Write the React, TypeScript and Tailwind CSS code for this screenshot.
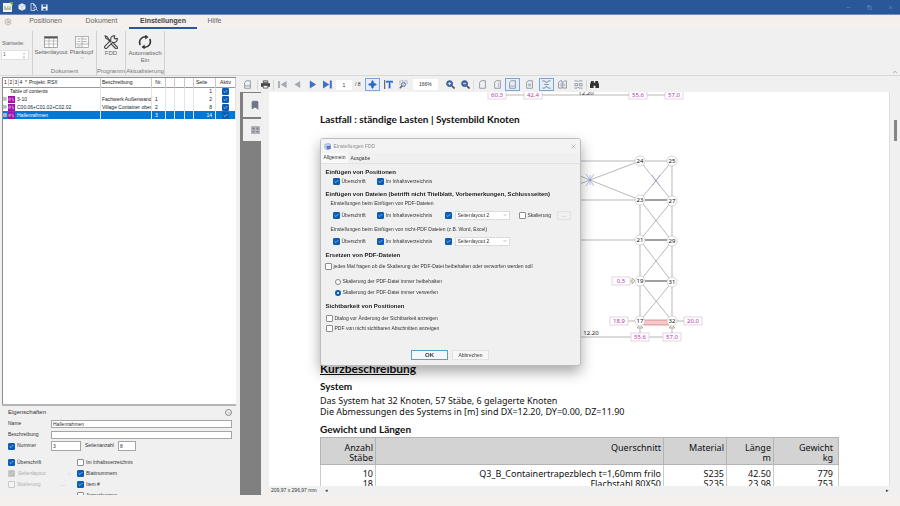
import type { ReactNode } from "react";
import {
  BookmarkIcon,
  Check,
  ChevronDown,
  ChevronUp,
  Copy,
  Minus,
  Settings,
  X,
} from "lucide-react";

const ui = "font-['Liberation_Sans',Arial,sans-serif]";
const docFont = "font-['Noto_Sans','Open_Sans',sans-serif]";
const docBold = "font-['Lato','Noto_Sans',sans-serif] font-bold";

type CheckProps = {
  label?: string;
  name?: string;
  checked?: boolean;
  disabled?: boolean;
  className?: string;
};

function CheckField({ label, name, checked, disabled, className = "" }: CheckProps) {
  return (
    <label className={`flex items-center gap-[2px] whitespace-nowrap ${disabled ? "text-[#b4b4b4]" : ""} ${className}`}>
      <span className="grid size-[7px] shrink-0">
        <input
          type="checkbox"
          aria-label={label ? undefined : name}
          defaultChecked={checked}
          disabled={disabled}
          className="col-start-1 row-start-1 size-[7px] appearance-none rounded-[1px] border border-[#8c8c8c] bg-white checked:border-[#0b5cb5] checked:bg-[#0b5cb5] disabled:border-[#c8c8c8] disabled:bg-[#f4f4f4] disabled:checked:bg-[#bdbdbd]"
        />
        {checked && <Check className="pointer-events-none col-start-1 row-start-1 size-[5px] place-self-center text-[#d5e4f5]" strokeWidth={3} />}
      </span>
      {label}
    </label>
  );
}

/* ---------- title bar ---------- */

function TitleBar() {
  return (
    <header className="flex h-[15px] shrink-0 items-center gap-[3px] border-b border-[#6d8fc0] bg-[#2a579a] px-[3px] text-white">
      <svg viewBox="0 0 10 10" className="mr-[2px] size-[10px]" aria-hidden="true">
        <rect y="1" width="9" height="9" fill="#f1f4ee" />
        <path d="M6 0h4v4z" fill="#6aa84f" />
        <path d="M1 5h2M4 5h1.5M6.500 5H8M1 7h7" stroke="#7d9270" strokeWidth="1" />
      </svg>
      <button aria-label="Neu">
        <svg viewBox="0 0 8 8" className="size-[8px]">
          <path d="M4 .3 7.500 2v4L4 7.700.5 6V2z" fill="#e6eefb" />
          <path d="M.5 2 4 3.500 7.500 2M4 3.500v4" stroke="#9db7dc" strokeWidth=".6" fill="none" />
        </svg>
      </button>
      <button aria-label="Vorschau" className="ml-[1px]">
        <svg viewBox="0 0 8 8" className="size-[8px]" fill="none" stroke="#d6e2f3" strokeWidth=".8">
          <path d="M5 7.500H1V.5h2.500L5.500 2.500V4M3.500.5v2h2" />
          <circle cx="5.200" cy="5.200" r="1.400" />
          <path d="m6.200 6.200 1.500 1.500" />
        </svg>
      </button>
      <button aria-label="Speichern">
        <svg viewBox="0 0 8 8" className="size-[7px]">
          <path d="M.5.5h7v7h-7z" fill="#f3f7fd" />
          <path d="M2 .5h4v2.500H2zM2.500 5h3v2.500h-3z" fill="#2a579a" />
        </svg>
      </button>
      <div className="ml-auto flex items-center gap-[16px] pr-[4px] text-[#7f9dca]">
        <button aria-label="Minimieren"><Minus className="size-[5px]" /></button>
        <button aria-label="Wiederherstellen"><Copy className="size-[5px]" /></button>
        <button aria-label="Schließen"><X className="size-[5px]" /></button>
      </div>
    </header>
  );
}

/* ---------- ribbon ---------- */

function RibbonTabs() {
  return (
    <nav className="flex h-[14px] shrink-0 items-stretch bg-[#f3f0ee] text-[7px] text-[#6a6a6a]">
      <button aria-label="Optionen" className="w-[17px] pl-[4px]"><Settings className="size-[8px] text-[#888]" strokeWidth={1.5} /></button>
      <button className="w-[57px] border-b-2 border-transparent">Positionen</button>
      <button className="w-[55px] border-b-2 border-transparent">Dokument</button>
      <button className="w-[68px] border-b-2 border-[#2a579a] font-bold text-[#444]">Einstellungen</button>
      <button className="w-[35px] border-b-2 border-transparent">Hilfe</button>
    </nav>
  );
}

function RibbonGroup({ title, children }: { title: string; children: ReactNode }) {
  return (
    <section className="flex flex-col justify-between border-l border-[#d2d2d2]">
      <div className="flex justify-center gap-[2px]">{children}</div>
      <h2 className="text-center leading-[8px] text-[#777]">{title}</h2>
    </section>
  );
}

function Ribbon() {
  return (
    <div className="flex h-[47px] shrink-0 border-b border-[#d8d8d8] bg-[#f0f0f0] pt-[2px] text-[6px] text-[#666]">
      <div className="w-[32px] pt-[8px]">
        <label htmlFor="start" className="block pl-[2px] text-[5px] leading-[8px]">Startseite:</label>
        <div className="mt-[3px] ml-[1px] flex h-[10px] w-[28px] items-center border border-[#e0e0e0] bg-white">
          <input id="start" defaultValue="1" className="w-[20px] pl-[1px] text-[5px]" />
          <svg viewBox="0 0 4 8" className="h-[7px] w-[4px]" fill="#777" aria-hidden="true"><path d="M1 2.500 2 1l1 1.500zM1 5.500h2L2 7z" /></svg>
        </div>
      </div>
      <RibbonGroup title="Dokument">
        <button className="flex w-[36px] flex-col items-center pt-[5px]">
          <svg viewBox="0 0 14 12" className="h-[12px] w-[14px]" fill="none" stroke="#858585" strokeWidth=".7">
            <rect x=".5" y=".5" width="13" height="11" fill="#fff" />
            <path d="M.5 1.500h13" stroke="#555" strokeWidth="2" />
            <path d="M.5 5h13M.5 8h13M5 2v9.500M9.500 2v9.500" strokeWidth=".5" />
          </svg>
          <span className="mt-[1px] leading-[7px]">Seitenlayout</span>
        </button>
        <button className="flex w-[25px] flex-col items-center pt-[5px] pr-[4px]">
          <svg viewBox="0 0 14 12" className="h-[12px] w-[14px]" fill="none" stroke="#999" strokeWidth=".7">
            <rect x=".5" y=".5" width="13" height="11" fill="#fafafa" />
            <path d="M2.500 3h3M2.500 5.500h3M7 3h5M7 5.500h5M.5 8h13M7 .5v11M2.500 10h3" />
          </svg>
          <span className="mt-[1px] leading-[7px]">Plankopf</span>
          <ChevronDown className="size-[4px]" />
        </button>
      </RibbonGroup>
      <RibbonGroup title="Programm">
        <button className="flex w-[28px] flex-col items-center pt-[4px]">
          <svg viewBox="0 0 14 14" className="size-[14px]" fill="none" stroke="#444" strokeWidth="1.100" strokeLinecap="round" strokeLinejoin="round">
            <path d="m1 .8 2.600 1.300.6 1.600L7 6.400M1 .8l1.100 2.700 1.600.6L6.300 7" />
            <path d="m8.400 7.200 4.800 4.800a1 1 0 0 1-1.600 1.500L7 8.900M13.200 3.200l-1.900.8-1.200-1.200.7-2a3.300 3.300 0 0 0-3.900 4.300L1 11.200a1.100 1.100 0 0 0 1.900 1.900l5.900-5.900a3.300 3.300 0 0 0 4.400-4z" />
          </svg>
          <span className="mt-[1px] leading-[7px]">FDD</span>
        </button>
      </RibbonGroup>
      <RibbonGroup title="Aktualisierung">
        <button className="flex w-[38px] flex-col items-center pt-[4px]">
          <svg viewBox="0 0 14 14" className="size-[14px]" fill="none" stroke="#333" strokeWidth="1.600">
            <path d="M2.300 10A5.600 5.600 0 0 1 8 1.800M11.700 4A5.600 5.600 0 0 1 6 12.200" />
            <path d="m7.300-.4 3.200 2.300-3.200 2.500zM6.700 9.600l-3.200 2.500 3.200 2.300z" fill="#333" stroke="none" />
          </svg>
          <span className="mt-[1px] leading-[7px]">Automatisch<br />Ein</span>
        </button>
      </RibbonGroup>
      <div className="w-px bg-[#d2d2d2]" />
      <button aria-label="Menüband reduzieren" className="mt-auto mr-[2px] ml-auto text-[#666]"><ChevronUp className="size-[6px]" /></button>
    </div>
  );
}

/* ---------- project tree ---------- */

const rows = [
  { name: "Table of contents", text: "", nr: "", page: 1 },
  { name: "3-10", text: "Fachwerk Außenwand", nr: "1", page: 2 },
  { name: "C00.06+C01.02+C02.02", text: "Village Container oben", nr: "2", page: 8 },
  { name: "Hallenrahmen", text: "", nr: "3", page: 14, selected: true },
];

function ProjectTable() {
  return (
    <table className="w-full table-fixed border-collapse text-[5px] leading-[7px] text-[#222]">
      <colgroup>
        <col />
        <col className="w-[51px]" />
        <col className="w-[14px]" />
        <col className="w-[9px]" />
        <col className="w-[10px]" />
        <col className="w-[9px]" />
        <col className="w-[22px]" />
        <col className="w-[20px]" />
      </colgroup>
      <thead>
        <tr className="h-[9px] border-b border-[#9a9a9a] text-left [&>th]:border-r [&>th]:border-[#c8c8c8] [&>th]:font-normal">
          <th className="whitespace-nowrap">
            <span className="flex items-center">
              <span className="w-[5px] text-center">1</span>
              <span className="w-[5px] border-l border-[#ccc] text-center">2</span>
              <span className="w-[5px] border-l border-[#ccc] text-center">3</span>
              <span className="w-[5px] border-l border-[#ccc] text-center">4</span>
              <span className="w-[6px] text-center">*</span>
              Projekt: RSX
            </span>
          </th>
          <th className="pl-[1px]">Beschreibung</th>
          <th className="text-center">Nr.</th>
          <th />
          <th />
          <th />
          <th className="pl-[2px]">Seite</th>
          <th className="text-center">Aktiv</th>
        </tr>
      </thead>
      <tbody>
        {rows.map((row, i) => (
          <tr
            key={row.name}
            className={`h-[8px] [&>td]:border-r [&>td]:border-[#e3e3e3] ${row.selected ? "bg-[#0078d7] text-white" : ""}`}
          >
            <td>
              {i === 0 ? (
                <span className="pl-[7px]">{row.name}</span>
              ) : (
                <span className="flex items-center gap-[1px] whitespace-nowrap">
                  <svg viewBox="0 0 4 4" className="size-[4px] shrink-0" aria-hidden="true">
                    <rect x=".3" y=".3" width="3.400" height="3.400" fill="#fff" stroke="#999" strokeWidth=".5" />
                    <path d="M1 2h2M2 1v2" stroke="#555" strokeWidth=".5" />
                  </svg>
                  <svg viewBox="0 0 7 7" className="mr-[1px] size-[7px] shrink-0" aria-hidden="true">
                    <rect width="7" height="7" fill="#a30fa8" />
                    <path d="M1 5V2h1.500v1.500H1l1.500 1.500M5.500 2H4v1.500h1.500V5H4" stroke="#e3a5e6" strokeWidth=".6" fill="none" />
                  </svg>
                  {row.name}
                </span>
              )}
            </td>
            <td className="overflow-hidden pl-[1px] whitespace-nowrap">{row.text}</td>
            <td className="pl-[3px]">{row.nr}</td>
            <td />
            <td />
            <td />
            <td className="pr-[3px] text-right">{row.page}</td>
            <td><CheckField checked name={`${row.name} aktiv`} className="justify-center" /></td>
          </tr>
        ))}
      </tbody>
    </table>
  );
}

function Properties() {
  const field = "h-[8px] border border-[#a5a5a5] bg-white px-[1px] text-[5px] text-[#333]";
  return (
    <section className="h-[91px] shrink-0 overflow-hidden border-t-2 border-[#b5b5b5] bg-[#f0f0f0] pt-[1px] pr-[4px] pl-[6px] text-[5px] text-[#333]">
      <div className="flex h-[11px] items-center justify-between">
        <h2 className="text-[6px]">Eigenschaften</h2>
        <button aria-label="Einklappen" className="grid size-[7px] place-items-center rounded-full border border-[#888]"><ChevronDown className="size-[4px]" /></button>
      </div>
      <div className="flex h-[11px] items-center">
        <label htmlFor="name" className="w-[43px]">Name</label>
        <input id="name" defaultValue="Hallenrahmen" className={field + " min-w-0 flex-1"} />
      </div>
      <div className="flex h-[11px] items-center">
        <label htmlFor="desc" className="w-[43px]">Beschreibung</label>
        <input id="desc" className={field + " min-w-0 flex-1"} />
      </div>
      <div className="flex h-[12px] items-center">
        <CheckField label="Nummer" checked className="w-[43px]" />
        <input aria-label="Nummer" defaultValue="3" className={field + " h-[10px] w-[30px]"} />
        <label htmlFor="pages" className="mr-[4px] ml-[4px]">Seitenanzahl</label>
        <input id="pages" defaultValue="8" className={field + " h-[10px] w-[18px]"} />
      </div>
      <div className="mt-[5px] grid grid-cols-[69px_1fr] [&>*]:h-[11px]">
        <CheckField label="Überschrift" checked />
        <CheckField label="Im Inhaltsverzeichnis" />
        <div className="flex items-center gap-[3px] text-[#aaa]">
          <CheckField checked disabled name="Seitenlayout verwenden" />
          <select aria-label="Seitenlayout" disabled className="w-[46px] appearance-none">
            <option>Seitenlayout</option>
          </select>
          <ChevronDown className="size-[4px]" />
        </div>
        <CheckField label="Blattnummern" checked />
        <div className="flex items-center">
          <CheckField label="Skalierung" disabled />
          <button disabled className="ml-[20px] text-[#999]">...</button>
        </div>
        <CheckField label="Item #" checked />
        <span />
        <CheckField label="Anmerkungen" />
      </div>
    </section>
  );
}

/* ---------- viewer ---------- */

function ToolButton({ label, active, children }: { label: string; active?: boolean; children: ReactNode }) {
  return (
    <button
      aria-label={label}
      className={`grid h-[13px] w-[15px] shrink-0 place-items-center border ${active ? "border-[#79a7d3] bg-[#e3eef9]" : "border-transparent"}`}
    >
      <svg viewBox="0 0 10 10" className="size-[9px]" fill="none">
        {children}
      </svg>
    </button>
  );
}

const page = "M3.500.8h4.700v8.400H1.800V2.800z";

function ViewerToolbar() {
  return (
    <div className="flex h-[15px] shrink-0 items-center bg-[#f0f0f0] text-[5px] text-[#333]">
      <ToolButton label="Öffnen"><path d={page} stroke="#8b93a3" /><path d="M2 6.500h6" stroke="#8b93a3" /></ToolButton>
      <div className="ml-[2px] h-[10px] w-px bg-[#d5d5d5]" />
      <ToolButton label="Drucken"><path d="M2.500 1h5v2h-5z" stroke="#444" /><path d="M0 3.500h10v4H0z" fill="#444" /><path d="M2.500 6h5v3h-5z" fill="#f0f0f0" stroke="#444" strokeWidth=".8" /></ToolButton>
      <div className="mr-[1px] h-[10px] w-px bg-[#d5d5d5]" />
      <ToolButton label="Erste Seite"><path d="M0 1h2v8H0zM9.500 1v8L3 5z" fill="#a5a9b2" /></ToolButton>
      <ToolButton label="Vorherige Seite"><path d="M8 1v8L1.500 5z" fill="#a5a9b2" /></ToolButton>
      <ToolButton label="Nächste Seite"><path d="M2 .5v9L9 5z" fill="#3e6fd0" /></ToolButton>
      <ToolButton label="Letzte Seite"><path d="M0 .5v9L7 5zM7.500.5h2.300v9H7.500z" fill="#3e6fd0" /></ToolButton>
      <input aria-label="Seite" defaultValue="1" className="ml-[1px] h-[10px] w-[16px] bg-white text-center text-[5px]" />
      <span className="ml-[3px] w-[10px] whitespace-nowrap">/ 8</span>
      <ToolButton label="Verschieben" active><path d="M5 0 6.500 2v1.500H8L10 5 8 6.500H6.500V8L5 10 3.500 8V6.500H2L0 5l2-1.500h1.500V2z" fill="#2f67cb" /></ToolButton>
      <div className="w-[1px]" />
      <ToolButton label="Text auswählen"><path d="M.8 0v10" stroke="#334" strokeWidth="1" /><path d="M2.500.8h7.300v2.500H8.700L8.200 2.500H7.200V8.500l1 .7H4.200l1-.7V2.500H4.100l-.5.800H2.500z" fill="#2f67cb" /></ToolButton>
      <ToolButton label="Bereich zoomen"><path d="M1 5V1h8v4" stroke="#8b93a3" strokeDasharray="1 .6" /><circle cx="5" cy="5" r="2.300" fill="#bcd0ee" stroke="#5d7397" /><path d="m3.300 6.700-2.500 2.500" stroke="#555" strokeWidth="1.400" /></ToolButton>
      <select aria-label="Zoom" className="mr-[5px] ml-[2px] h-[11px] w-[25px] shrink-0 appearance-none bg-white pl-[6px] text-[5px]">
        <option>166%</option>
      </select>
      <ToolButton label="Vergrößern"><circle cx="4" cy="4" r="3.300" fill="#4070c8" stroke="#445064" /><path d="M2.500 4h3M4 2.500v3" stroke="#fff" strokeWidth=".9" /><path d="m6.500 6.500 3 3" stroke="#445064" strokeWidth="1.800" /></ToolButton>
      <ToolButton label="Verkleinern"><circle cx="4" cy="4" r="3.300" fill="#4070c8" stroke="#445064" /><path d="M2.500 4h3" stroke="#fff" strokeWidth=".9" /><path d="m6.500 6.500 3 3" stroke="#445064" strokeWidth="1.800" /></ToolButton>
      <div className="mr-[1px] h-[10px] w-px bg-[#dcdcdc]" />
      <ToolButton label="Ganze Seite"><path d={page} stroke="#8b93a3" /></ToolButton>
      <ToolButton label="Seitenhöhe"><path d={page} stroke="#8b93a3" /><path d="M6 3v5" stroke="#8b93a3" strokeWidth=".7" /></ToolButton>
      <ToolButton label="Seitenbreite" active><path d={page} stroke="#8b93a3" /><path d="M2 6.800h6" stroke="#8b93a3" strokeWidth=".8" /></ToolButton>
      <div className="w-[2px]" />
      <ToolButton label="Drehen"><path d={page} stroke="#8b93a3" /><path d="M3.500 4h3v3h-3z" fill="#a9b7d2" /></ToolButton>
      <div className="w-[2px]" />
      <ToolButton label="Fortlaufend" active><path d="M.5 1H3l1 1.500h2L7 1h2.500M.5 9H3l1-1.500h2L7 9h2.500M2.500 5h5" stroke="#777f8e" /></ToolButton>
      <div className="w-[1px]" />
      <ToolButton label="Zwei Seiten"><path d="M2.200 1h2.300v8H.5V3zM7.200 1h2.300v8h-4V3z" stroke="#8b93a3" /><path d="M2.500 4v3M7.500 4v3" stroke="#8b93a3" strokeWidth=".7" /></ToolButton>
      <div className="w-[1px]" />
      <ToolButton label="Zwei Seiten fortlaufend"><path d="M.5 1h3l1 1 1-1h4M.5 9h3l1-1 1 1h4M1 4h3v2.500H1zM6 4h3v2.500H6z" stroke="#8b93a3" /></ToolButton>
      <div className="h-[10px] w-px bg-[#d5d5d5]" />
      <ToolButton label="Suchen"><path d="M1.300 1h2.900v2h1.600V1h2.900L10 5v4H6V6.500H4V9H0V5z" fill="#333" /></ToolButton>
    </div>
  );
}

const nodes = [
  [24, 320, 11], [25, 352, 11],
  [23, 320, 50], [27, 352, 51],
  [21, 320, 90], [29, 352, 91],
  [19, 320, 131], [31, 352, 132],
  [17, 320, 171], [32, 352, 171],
];

const tags: [string, number, number][] = [
  ["0.5", 301, 131],
  ["18.9", 299, 171],
  ["20.0", 373, 171],
  ["55.6", 320, 187],
  ["57.0", 352, 187],
];

function Tag({ text, x, y }: { text: string; x: number; y: number }) {
  return (
    <g>
      <rect x={x - 9} y={y - 4} width="18" height="8" fill="#fff" stroke="#d3b4d0" strokeWidth=".6" />
      <text x={x} y={y + 2} textAnchor="middle" fontSize="6" fill="#b03aa0">{text}</text>
    </g>
  );
}

function TopDimension() {
  return (
    <svg viewBox="0 0 519 10" className="h-[10px] w-full" preserveAspectRatio="xMinYMin meet">
      <path d="M177 3h177" stroke="#888" strokeWidth=".6" />
      <text x="266" y="3" textAnchor="middle" fontSize="6" fill="#333">12.20</text>
      <Tag text="60.3" x={177} y={3} />
      <Tag text="42.4" x={213} y={3} />
      <Tag text="55.6" x={318} y={3} />
      <Tag text="57.0" x={354} y={3} />
    </svg>
  );
}

function TrussDrawing() {
  return (
    <svg viewBox="0 0 519 212" className="h-[212px] w-full" preserveAspectRatio="xMinYMin meet">
      <g stroke="#999" strokeWidth=".7" fill="none">
        <path d="M0 11h352M0 50h320M0 90h320M320 50v121M352 11v160" />
        <path d="M320 50h32M320 90h32M320 131h32" stroke="#a0a0a0" strokeWidth="2" />
        <path d="M320 50 220 10M320 11 220 49" />
        <path d="m320 11 32 40M352 11l-32 39M320 50l32 41M352 51l-32 39M320 90l32 42M352 91l-32 40M320 131l32 40M352 132l-32 39" />
        <path d="M307 131h13M305 171h62M0 187h352M320 174v10M352 174v10" />
      </g>
      <path d="M270 25v10M266 24l8 12M266 36l8-12M332 25l8 11M340 25l-8 11" stroke="#8b90d8" strokeWidth=".6" />
      <path d="M324 170h25v5h-25z" fill="#f5c9c9" stroke="#e06a6a" strokeWidth=".7" />
      <path d="m317 178 3-3 3 3zM349 178l3-3 3 3zM312 128v6l3-3z" fill="#eef0e0" stroke="#8a8f76" strokeWidth=".6" />
      {nodes.map(([id, x, y]) => (
        <g key={id}>
          <circle cx={x} cy={y} r="5" fill="#fff" stroke="#bbb" strokeWidth=".6" />
          <text x={x} y={y + 2} textAnchor="middle" fontSize="6" fill="#111">{id}</text>
        </g>
      ))}
      {tags.map(([text, x, y]) => (
        <Tag key={text} text={text} x={x} y={y} />
      ))}
      <text x="271" y="185" textAnchor="middle" fontSize="6" fill="#222">12.20</text>
    </svg>
  );
}

const sections = [
  ["10", "Q3_B_Containertrapezblech t=1,60mm frilo", "S235", "42.50", "779"],
  ["18", "Flachstahl 80X50", "S235", "23.98", "753"],
];

function DocumentPage() {
  return (
    <article className={`min-w-0 flex-1 overflow-hidden border-r border-[#ddd] bg-white pr-[50px] pl-[51px] text-[9px] text-[#111] ${docFont}`}>
      <TopDimension />
      <h2 className={`mt-[11px] text-[10px] leading-[12px] ${docBold}`}>Lastfall : ständige Lasten | Systembild Knoten</h2>
      <div className="mt-[25px]"><TrussDrawing /></div>
      <h1 className={`text-[12px] leading-[14px] underline ${docBold}`}>Kurzbeschreibung</h1>
      <h2 className={`mt-[4px] text-[10px] leading-[12px] ${docBold}`}>System</h2>
      <p className="mt-[3px] leading-[11px]">
        Das System hat 32 Knoten, 57 Stäbe, 6 gelagerte Knoten<br />
        Die Abmessungen des Systems in [m] sind DX=12.20, DY=0.00, DZ=11.90
      </p>
      <h2 className={`mt-[6px] text-[10px] leading-[12px] ${docBold}`}>Gewicht und Längen</h2>
      <table className="mt-[2px] w-full table-fixed border-collapse text-right leading-[10px]">
        <colgroup>
          <col className="w-[55px]" />
          <col />
          <col className="w-[63px]" />
          <col className="w-[47px]" />
          <col className="w-[65px]" />
        </colgroup>
        <thead>
          <tr className="h-[27px] bg-[#d3d3d3] align-top [&>th]:border [&>th]:border-[#b4b4b4] [&>th]:px-[2px] [&>th]:pt-[5px] [&>th]:font-normal">
            <th>Anzahl<br />Stäbe</th>
            <th>Querschnitt</th>
            <th>Material</th>
            <th>Länge<br />m</th>
            <th><span className="block pr-[3px]">Gewicht<br />kg</span></th>
          </tr>
        </thead>
        <tbody>
          {sections.map((row, i) => (
            <tr key={row[0]} className="[&>td]:border-x [&>td]:border-[#ccc] [&>td]:px-[2px] [&>td:last-child]:pr-[5px]">
              {row.map((cell) => <td key={cell} className={i === 0 ? "pt-[4px]" : ""}>{cell}</td>)}
            </tr>
          ))}
        </tbody>
      </table>
    </article>
  );
}

function Viewer() {
  return (
    <main className="flex min-w-0 flex-1 flex-col bg-[#f0f0f0]">
      <ViewerToolbar />
      <div className="flex min-h-0 flex-1">
        <aside className="flex w-[21px] shrink-0 flex-col gap-[2px] bg-[#808080] pt-[1px] pl-[3px]">
          <button aria-label="Lesezeichen" className="grid h-[24px] place-items-center bg-[#f0f0f0] pl-[6px]">
            <BookmarkIcon className="size-[10px] fill-[#6d7585] text-[#6d7585]" />
          </button>
          <button aria-label="Miniaturen" className="grid h-[22px] place-items-center bg-[#f0f0f0] pl-[6px]">
            <svg viewBox="0 0 9 8" className="h-[8px] w-[9px]"><path d="M0 0h9v8H0z" fill="#b4b6bb" /><path d="M1.500 1.500h2v2h-2zM5.500 1.500h2v2h-2zM1.500 5h2v1.500h-2zM5.500 5h2v1.500h-2z" fill="#777b85" /></svg>
          </button>
        </aside>
        <div className="flex min-w-0 flex-1 flex-col">
          <div className="flex min-h-0 flex-1 pl-[8px]">
            <DocumentPage />
            <div className="w-[10px] pt-[28px] pl-[4px]"><div className="h-[21px] w-[3px] bg-[#858585]" /></div>
          </div>
          <div className="flex h-[9px] shrink-0 items-center pr-[11px] pl-[10px] text-[5px] text-[#333]">
            <span className="w-[54px] whitespace-nowrap">209,97 x 296,97 mm</span>
            <span>◂</span>
            <span className="ml-auto">▸</span>
          </div>
        </div>
      </div>
    </main>
  );
}

/* ---------- dialog ---------- */

function LayoutSelect({ id }: { id: string }) {
  return (
    <div className="flex items-center gap-[3px]">
      <CheckField checked name={`${id} verwenden`} />
      <span className="flex h-[9px] w-[55px] items-center border border-[#dcdcdc] bg-white pr-[2px]">
        <select aria-label={id} className="min-w-0 flex-1 appearance-none pl-[2px] text-[5px]">
          <option>Seitenlayout 2</option>
        </select>
        <ChevronDown className="size-[4px]" />
      </span>
    </div>
  );
}

function FileOptions({ id, children }: { id: string; children?: ReactNode }) {
  return (
    <div className="flex h-[10px] items-center pl-[8px]">
      <CheckField label="Überschrift" checked className="w-[44px]" />
      <CheckField label="Im Inhaltsverzeichnis" checked className="w-[68px]" />
      <LayoutSelect id={id} />
      {children}
    </div>
  );
}

function ScaleRadio({ label, checked }: { label: string; checked?: boolean }) {
  return (
    <label className="flex items-center gap-[2px]">
      <input
        type="radio"
        name="scale"
        defaultChecked={checked}
        className="size-[6px] appearance-none rounded-full border border-[#868686] bg-white checked:border-2 checked:border-[#0b5cb5]"
      />
      {label}
    </label>
  );
}

function SettingsDialog() {
  const heading = "pl-[1px] text-[6px] leading-[8px] font-bold text-[#222]";
  return (
    <div className="pointer-events-none fixed inset-0 flex items-center justify-center pb-[2px]">
      <div
        role="dialog"
        aria-labelledby="dialog-title"
        className="pointer-events-auto flex h-[228px] w-[261px] flex-col overflow-hidden rounded-[3px] border border-[#bdbdbd] bg-[#f0f0f0] text-[5px] leading-[7px] text-[#333] shadow-[0_6px_14px_rgba(0,0,0,0.35)]"
      >
        <div className="flex h-[14px] shrink-0 items-center gap-[3px] bg-[#f3f3f3] px-[3px] text-[#8a8a8a]">
          <svg viewBox="0 0 8 8" className="size-[7px]" aria-hidden="true">
            <path d="M1 1.500 5 .5l2.500 1v5l-4 1L1 6z" fill="#c9d8f2" stroke="#6f8fce" strokeWidth=".6" />
            <path d="M3 3h4.500v3.500L4 7.500 3 6z" fill="#5378c6" />
          </svg>
          <h2 id="dialog-title">Einstellungen FDD</h2>
          <button aria-label="Schließen" className="ml-auto"><X className="size-[7px]" strokeWidth={1.5} /></button>
        </div>
        <div role="tablist" className="flex h-[11px] shrink-0 items-stretch border-b border-[#e2e2e2]">
          <button role="tab" aria-selected="true" className="bg-[#f9f9f9] px-[3px] pb-[2px]">Allgemein</button>
          <button role="tab" aria-selected="false" className="px-[2px]">Ausgabe</button>
        </div>
        <div className="flex-1 pt-[4px] pl-[4px]">
          <h3 className={heading}>Einfügen von Positionen</h3>
          <div className="flex h-[10px] items-center pl-[8px]">
            <CheckField label="Überschrift" checked className="w-[44px]" />
            <CheckField label="Im Inhaltsverzeichnis" checked />
          </div>

          <h3 className={`mt-[4px] ${heading}`}>Einfügen von Dateien (betrifft nicht Titelblatt, Vorbemerkungen, Schlussseiten)</h3>
          <p className="mt-[2px] mb-[3px] pl-[6px]">Einstellungen beim Einfügen von PDF-Dateien</p>
          <FileOptions id="Seitenlayout PDF">
            <CheckField label="Skalierung" className="ml-[9px]" />
            <button className="ml-[6px] h-[9px] w-[14px] border border-[#e2e2e2] leading-[5px] text-[#888]">...</button>
          </FileOptions>
          <p className="mt-[6px] mb-[3px] pl-[6px]">Einstellungen beim Einfügen von nicht-PDF Dateien (z.B. Word, Excel)</p>
          <FileOptions id="Seitenlayout andere" />

          <h3 className={`mt-[5px] ${heading}`}>Ersetzen von PDF-Dateien</h3>
          <CheckField label="jedes Mal fragen ob die Skalierung der PDF-Datei beibehalten oder verworfen werden soll" className="mt-[4px]" />
          <div className="mt-[8px] flex flex-col gap-[4px] pl-[10px]">
            <ScaleRadio label="Skalierung der PDF-Datei immer beibehalten" />
            <ScaleRadio label="Skalierung der PDF-Datei immer verwerfen" checked />
          </div>

          <h3 className={`mt-[6px] ${heading}`}>Sichtbarkeit von Positionen</h3>
          <CheckField label="Dialog vor Änderung der Sichtbarkeit anzeigen" className="mt-[5px] pl-[1px]" />
          <CheckField label="PDF von nicht sichtbaren Abschnitten anzeigen" className="mt-[3px] pl-[1px]" />
        </div>
        <div className="flex h-[18px] shrink-0 items-start justify-center gap-[4px] pt-[3px]">
          <button className="h-[10px] w-[37px] border border-[#5aa0c8] bg-[#f4f8fb] text-[6px] leading-[8px] font-bold">OK</button>
          <button className="h-[10px] w-[37px] border border-[#e2e2e2] bg-[#f7f7f7] text-[5px] leading-[8px]">Abbrechen</button>
        </div>
      </div>
    </div>
  );
}

export default function App() {
  return (
    <div className={`flex h-screen flex-col overflow-hidden bg-[#f0f0f0] ${ui}`}>
      <TitleBar />
      <RibbonTabs />
      <Ribbon />
      <div className="mt-[1px] flex min-h-0 flex-1">
        <div className="flex w-[240px] shrink-0 flex-col pr-[4px] pl-[2px]">
          <div className="min-h-0 flex-1 border-t border-l border-[#8c8c8c] bg-white">
            <ProjectTable />
          </div>
          <Properties />
        </div>
        <Viewer />
      </div>
      <footer className="h-[11px] shrink-0 bg-[#f3f0ee]" />
      <SettingsDialog />
    </div>
  );
}
